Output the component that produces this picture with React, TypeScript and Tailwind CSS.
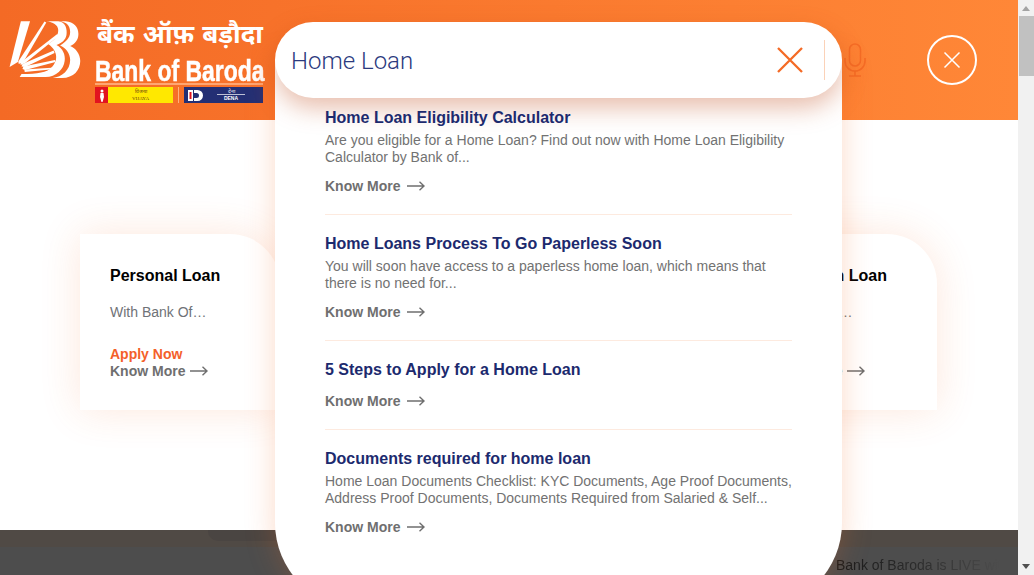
const results = [
  {
    title: "Home Loan Eligibility Calculator",
    text: "Are you eligible for a Home Loan? Find out now with Home Loan Eligibility Calculator by Bank of...",
  },
  {
    title: "Home Loans Process To Go Paperless Soon",
    text: "You will soon have access to a paperless home loan, which means that there is no need for...",
  },
  { title: "5 Steps to Apply for a Home Loan", text: "" },
  {
    title: "Documents required for home loan",
    text: "Home Loan Documents Checklist: KYC Documents, Age Proof Documents, Address Proof Documents, Documents Required from Salaried & Self...",
  },
];

function Arrow() {
  return (
    <svg width="18" height="10" viewBox="0 0 18 10" fill="none" stroke="#6f6f6f" strokeWidth="1.4">
      <path d="M0 5h17M12.5 .8 17 5l-4.500 4.200" />
    </svg>
  );
}

function LoanCard({ title, text }: { title: string; text: string }) {
  return (
    <div className="w-[200px] h-[176px] pl-[30px] pt-[31px] bg-white rounded-tr-[50px] shadow-[0_0_40px_rgba(244,106,37,0.16)]">
      <h3 className="text-base leading-[22px] font-bold text-black">{title}</h3>
      <p className="mt-[17px] text-sm leading-[17px] text-[#6f7277]">{text}</p>
      <p className="mt-[26px] text-sm leading-[15px] font-bold text-[#f4602a]">Apply Now</p>
      <a className="flex items-center gap-[5px] text-sm leading-[18px] font-bold text-[#6f6f6f]">
        Know More <Arrow />
      </a>
    </div>
  );
}

function Logo() {
  return (
    <div className="flex items-start gap-[12px] pl-[5px] pt-[12px]">
      {/* Baroda sun with the double B */}
      <svg width="78" height="75" viewBox="0 0 85 75" preserveAspectRatio="none" fill="white">
        <path d="M17.300 9.300H27.300L14 50 5 55z" />
        <path d="M43 9.500l2 1L20 50l-5 2-.5-2.500z" />
        <path d="M57 22l1.500 2L22 51l-5 2 0-2.500z" />
        <path d="M53 38.500l1 2.500-32 14-4-.5 1-2.500z" />
        <path d="M54.500 48l.5 2-33 8-3-1 1-2.500z" />
        <path d="M55 55.500V57l-33.500 3-.5-2.500z" />
        <path d="M45 9.300H58C66 10 68 17 67 23 66 28 62 31 56 33 63 36 66 43 65 49 64 57 56 65 44 65H16L18 62C36 62 46 60 50 56 55 52 57 46 55 41 53 36 50 34 47 32 54 28 58 24 58 18 58 13 52 10 45 9.300Z" />
        <path d="M60 9.300H66C75 10 80 15 80 22 80 28 76 32 71 34 77 36 82 42 82 49 82 58 75 66 62 66H52C62 65 71 58 71 48 71 41 66 36 60 33.500 66 30 71 26 71 20 71 14 67 10 60 9.300Z" />
      </svg>
      <div className="w-[168px] text-white">
        <div className="h-[36px] mt-[3px] flex justify-between pl-[2px] text-[26px] leading-[36px] font-bold whitespace-nowrap font-['Noto_Sans',sans-serif]">
          <span>बैंक</span>
          <span>ऑफ़</span>
          <span>बड़ौदा</span>
        </div>
        <div className="h-[25px] mt-[7px] text-[30px] leading-[25px] font-bold whitespace-nowrap origin-left scale-x-[0.765] [-webkit-text-stroke:0.5px_white]">
          Bank of Baroda
        </div>
        <div className="h-[2px] bg-[#ffa672]" />
        <div className="flex items-center mt-[2px] h-[16px]">
          <div className="w-[13px] h-full flex items-center justify-center bg-[#e2131f]">
            <svg width="6" height="13" viewBox="0 0 6 13" fill="white">
              <circle cx="3" cy="2" r="1.500" />
              <path d="M1.500 4h3l.5 4-1.500 5h-1L1 8z" />
            </svg>
          </div>
          <div className="w-[65px] h-full pt-[1px] text-center text-[5px] leading-[7px] text-[#6b3a10] bg-[#ffe800]">
            <div>विजया</div>
            <div className="font-['Liberation_Serif',serif]">VIJAYA</div>
          </div>
          <div className="w-px h-full mx-[5px] bg-[#ffb27e]" />
          <div className="flex-1 h-full flex items-center pl-[4px] bg-[#232f74] text-white text-[5px] leading-[7px]">
            <svg width="15" height="11" viewBox="0 0 15 11">
              <rect width="5" height="11" fill="white" />
              <rect x="1.500" y="2" width="2" height="7" fill="#e2131f" />
              <path d="M6 0h3.500a5.500 5.500 0 0 1 0 11H6V8h2.500a2.500 2.500 0 0 0 0-5H6z" fill="white" />
            </svg>
            <div className="w-[56px] text-center">
              <div className="border-b border-white/70 mx-[14px] leading-[6px]">देना</div>
              <div className="font-bold leading-[7px]">DENA</div>
            </div>
          </div>
        </div>
      </div>
    </div>
  );
}

function SearchPanel() {
  return (
    <div className="absolute left-[275px] top-[22px] w-[567px] h-[586px]">
      {/* white sheet starts halfway down the input pill */}
      <div className="absolute inset-x-0 top-[38px] bottom-0 bg-white rounded-b-[85px] shadow-[0_0_30px_rgba(244,106,37,0.25)]" />
      <div className="relative h-[76px] pl-4 pr-[17px] flex items-center bg-white rounded-[38px] shadow-[0_10px_25px_rgba(190,70,20,0.35)]">
        <span className="flex-1 pt-[2px] text-[24px] font-light text-[#2b3a7e] font-['Roboto',sans-serif]">Home Loan</span>
        <svg width="28" height="28" viewBox="0 0 28 28" stroke="#f46a25" strokeWidth="2.300" className="mr-[20px]">
          <path d="M2 2l24 24M26 2 2 26" />
        </svg>
        <div className="w-px h-[40px] bg-[#fbd2b8]" />
      </div>
      <div className="relative px-[50px] pt-[2px]">
        {results.map((r) => (
          <div key={r.title} className="pt-[8px] pb-[18px] mb-[11px] border-b border-[#fdeadf] last:border-0">
            <h4 className="text-base leading-5 font-bold text-[#1c2a6e]">{r.title}</h4>
            {r.text && <p className="mt-[4px] mb-[10px] text-sm leading-[17px] text-[#727272]">{r.text}</p>}
            <a className={`flex items-center gap-[7px] text-sm leading-5 font-bold text-[#6f6f6f] ${r.text ? "" : "mt-[11px]"}`}>
              Know More <Arrow />
            </a>
          </div>
        ))}
      </div>
    </div>
  );
}

export default function App() {
  return (
    <div className="flex h-[575px] w-[1034px] overflow-hidden bg-white font-['Liberation_Sans',Arial,sans-serif]">
      <div className="relative flex-1 flex flex-col overflow-hidden">
        <header className="h-[120px] flex items-start justify-between bg-gradient-to-r from-[#f46a25] to-[#ff8737]">
          <Logo />
          <div className="flex items-center h-full">
            <svg width="22" height="34" viewBox="0 0 22 34" fill="none" stroke="#f46a25" strokeWidth="1.600" className="mr-[61px] opacity-90">
              <rect x="5.500" y="1" width="11" height="22" rx="5.500" />
              <path d="M1 15v3a10 10 0 0 0 20 0v-3M11 28v5M5 33h12" />
            </svg>
            <button className="w-[50px] h-[50px] mr-[41px] flex items-center justify-center rounded-full border-2 border-white">
              <svg width="18" height="18" viewBox="0 0 18 18" stroke="white" strokeWidth="1.500">
                <path d="M1.500 1.500l15 15M16.500 1.500l-15 15" />
              </svg>
            </button>
          </div>
        </header>

        <main className="flex-1 flex justify-between items-start pl-[80px] pr-[81px] pt-[114px]">
          <LoanCard title="Personal Loan" text="With Bank Of…" />
          <LoanCard title="Education Loan" text="For Studies…" />
        </main>

        <footer className="h-[45px] overflow-hidden">
          <div className="h-[17px] bg-[#504a45] pl-[208px]">
            <div className="w-[90px] h-[11px] pl-[17px] overflow-hidden rounded-b-[10px] bg-[#4a4542]">
              <div className="-mt-[14px] text-sm leading-[18px] whitespace-nowrap text-[#1c2a4e]">Enter Pig</div>
            </div>
          </div>
          <div className="h-[28px] bg-[#4d4d4d] pl-[836px] pt-[9px]">
            <div className="w-[164px] overflow-hidden text-sm leading-[18px] whitespace-nowrap text-transparent bg-clip-text bg-gradient-to-r from-[#1a1a1a] via-[#2c2c2c] to-[#4d4d4d]">
              Bank of Baroda is LIVE with
            </div>
          </div>
        </footer>

        <SearchPanel />
      </div>

      {/* scrollbar */}
      <div className="w-[16px] h-full flex flex-col items-center bg-[#f1f1f1]">
        <div className="mt-[6px] w-0 h-0 border-x-[4px] border-x-transparent border-b-[5px] border-b-[#a3a3a3]" />
        <div className="mt-[5px] w-[15px] h-[60px] bg-[#c1c1c1]" />
        <div className="mt-auto mb-[6px] w-0 h-0 border-x-[4px] border-x-transparent border-t-[5px] border-t-[#505050]" />
      </div>
    </div>
  );
}
